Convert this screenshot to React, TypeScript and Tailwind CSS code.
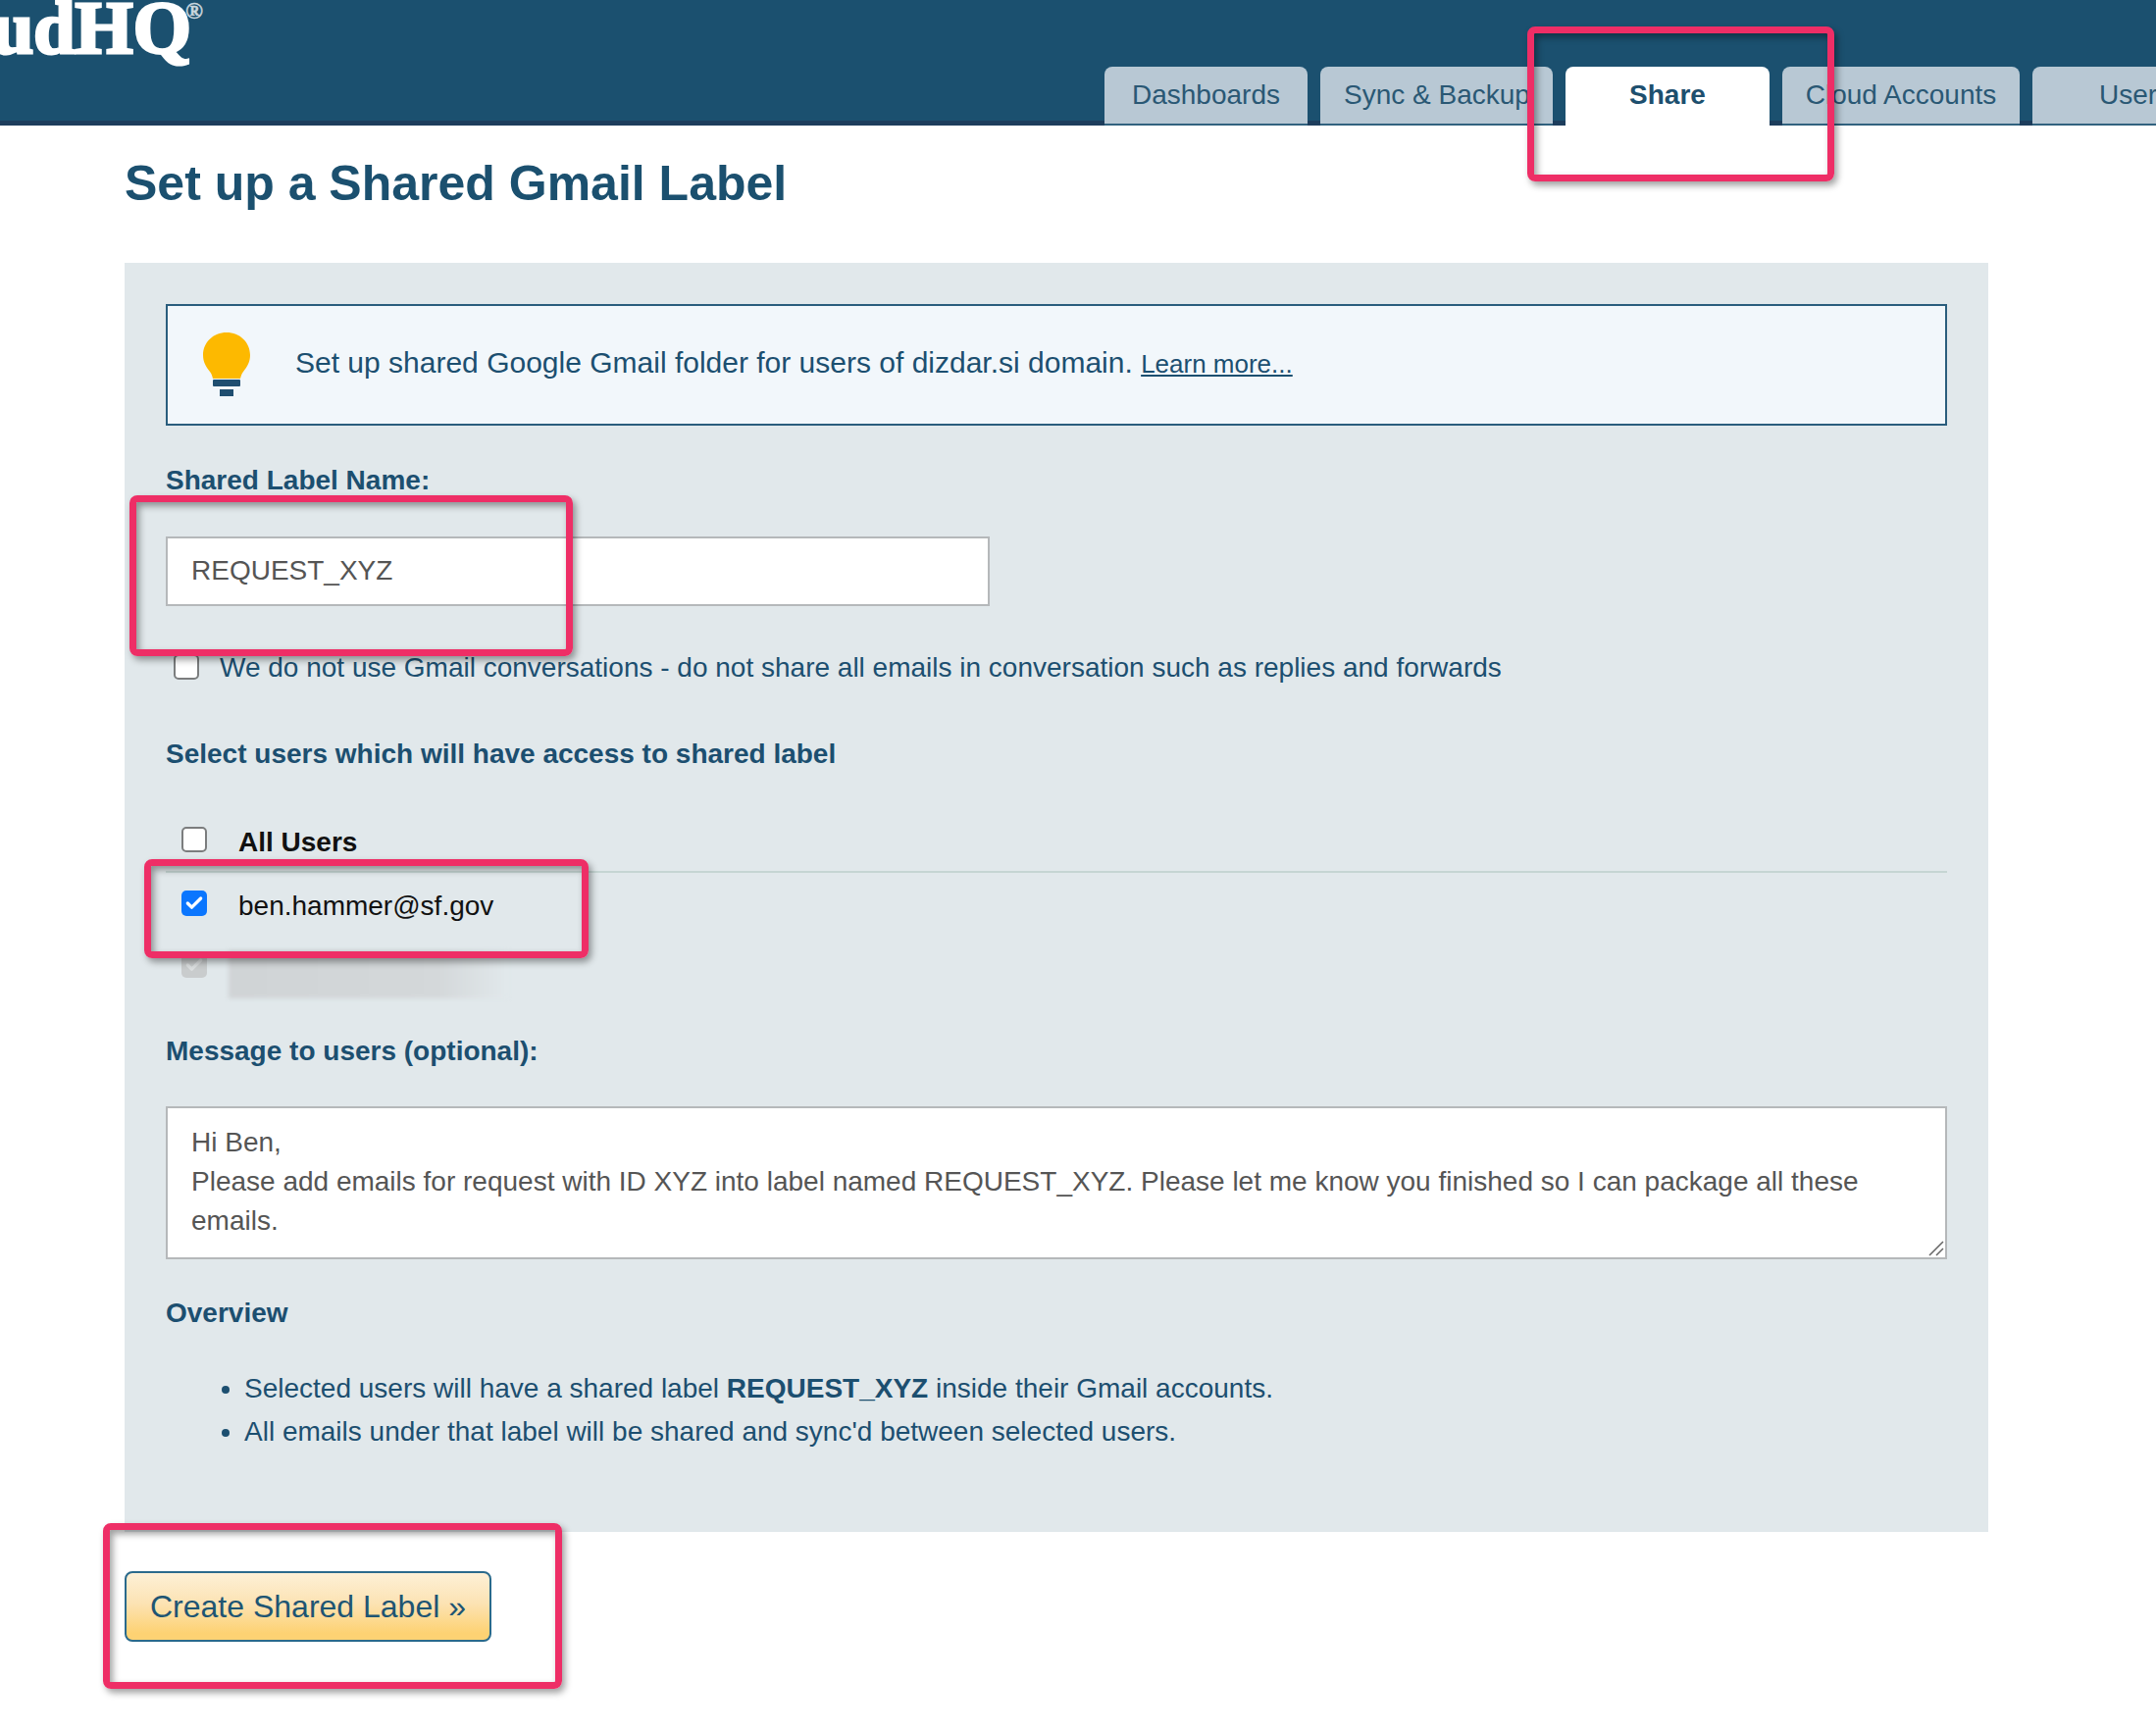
import { Check } from "lucide-react";

const tabClass =
  "h-[60px] shrink-0 rounded-t-[8px] border-b-2 border-[#31627f] bg-[#b8c8d4] text-center text-[28px] leading-[58px] text-[#2a5874]";

function Box({ state }: { state?: "checked" | "disabled" }) {
  if (state === "checked") {
    return (
      <span className="flex h-[26px] w-[26px] shrink-0 items-center justify-center rounded-[5px] bg-[#0b76fe]">
        <Check size={20} strokeWidth={4} className="text-white" />
      </span>
    );
  }
  if (state === "disabled") {
    return (
      <span className="flex h-[26px] w-[26px] shrink-0 items-center justify-center rounded-[5px] bg-[#c9cccd]">
        <Check size={20} strokeWidth={4} className="text-[#dcdfe0]" />
      </span>
    );
  }
  return <span className="h-[26px] w-[26px] shrink-0 rounded-[5px] border-2 border-[#7b7d7e] bg-white" />;
}

function Frame({ className }: { className: string }) {
  return (
    <div
      className={
        "pointer-events-none absolute rounded-[8px] border-[7px] border-[#ee2e66] shadow-[3px_4px_7px_rgba(0,0,0,0.38),inset_3px_4px_7px_rgba(0,0,0,0.38)] " +
        className
      }
    />
  );
}

export default function App() {
  return (
    <div className="relative h-[1766px] w-[2198px] overflow-hidden bg-white font-['Liberation_Sans',Arial,sans-serif]">
      <header className="flex h-[128px] items-end border-b-[5px] border-[#1d3d5c] bg-[#1b506f]">
        <div className="relative -ml-[122px] h-[123px] w-[317px] shrink-0 self-start font-['Liberation_Serif',serif] text-[76px] font-bold leading-[76px] text-white [-webkit-text-stroke:3px_white]">
          <span className="block -translate-y-[10px]">CloudHQ</span>
          <span className="absolute left-[311px] top-[-1px] text-[24px] leading-[24px] text-[#c9d6de] [-webkit-text-stroke:0.5px_#c9d6de]">®</span>
        </div>
        <nav className="relative -mb-[5px] ml-[931px] flex gap-[13px]">
          <div className={tabClass + " w-[207px]"}>Dashboards</div>
          <div className={tabClass + " w-[237px] pl-[24px] text-left"}>Sync &amp; Backup</div>
          <div className="h-[60px] w-[208px] shrink-0 rounded-t-[8px] bg-white text-center text-[28px] font-bold leading-[58px] text-[#1d4f6e]">
            Share
          </div>
          <div className={tabClass + " w-[242px]"}>Cloud Accounts</div>
          <div className={tabClass + " w-[200px] pl-[68px] text-left"}>Users</div>
        </nav>
      </header>

      <main className="pl-[127px] pr-[171px] text-[#1c4f70]">
        <h1 className="mt-[34px] text-[50px] font-bold leading-[50px] text-[#1b506f]">Set up a Shared Gmail Label</h1>

        <section className="mt-[56px] bg-[#e1e8eb] px-[42px] pb-[80px] pt-[42px]">
          <div className="flex h-[124px] items-center border-2 border-[#2a5d7d] bg-[#f2f7fb] pl-[36px]">
            <svg width="48" height="65" viewBox="0 0 48 65" className="shrink-0 -translate-y-[1px]">
              <path d="M24 0C10.5 0 0 10 0 23c0 7 3 12 7 17 1.5 2 2.5 4.5 3 7h28c.5-2.5 1.5-5 3-7 4-5 7-10 7-17C48 10 37.5 0 24 0z" fill="#fdb900" />
              <rect x="10" y="48" width="28" height="7" rx="1" fill="#1f4e70" />
              <rect x="17" y="58" width="14" height="7" fill="#1f4e70" />
            </svg>
            <p className="mb-[3px] ml-[46px] text-[30px] leading-[36px]">
              Set up shared Google Gmail folder for users of dizdar.si domain.{" "}
              <a className="text-[26px] underline">Learn more...</a>
            </p>
          </div>

          <label className="mt-[39px] block text-[28px] font-bold leading-[34px]">Shared Label Name:</label>
          <input
            readOnly
            defaultValue="REQUEST_XYZ"
            className="mt-[40px] block h-[71px] w-[840px] border-2 border-[#b5b8ba] bg-white px-[24px] pb-[2px] text-[28px] text-[#555555] outline-none"
          />

          <div className="ml-[8px] mt-[44px] flex h-[36px] items-center gap-[21px] text-[28px]">
            <Box />
            <span className="mt-[2px]">We do not use Gmail conversations - do not share all emails in conversation such as replies and forwards</span>
          </div>

          <h2 className="mt-[54px] text-[28px] font-bold leading-[34px]">Select users which will have access to shared label</h2>

          <div className="mt-[53px] border-b-2 border-[#c5d5d3] pb-[15px] pl-[16px]">
            <div className="flex h-[34px] items-center gap-[32px] text-[28px] font-bold text-[#111111]">
              <Box />
              <span className="mt-[6px] leading-[34px]">All Users</span>
            </div>
          </div>
          <div className="mt-[14px] flex h-[34px] items-center gap-[32px] pl-[16px] text-[28px] text-[#111111]">
            <Box state="checked" />
            <span className="mt-[6px] leading-[34px]">ben.hammer@sf.gov</span>
          </div>
          <div className="mt-[29px] flex h-[34px] items-center gap-[22px] pl-[16px]">
            <Box state="disabled" />
            <div className="mt-[18px] h-[49px] w-[285px] shrink-0 bg-[linear-gradient(90deg,#d0d4d6,#d4d8da_75%,#e1e8eb)] blur-[2px]" />
          </div>

          <label className="mt-[54px] block text-[28px] font-bold leading-[34px]">Message to users (optional):</label>
          <div className="relative mt-[39px]">
            <textarea
              readOnly
              defaultValue={
                "Hi Ben,\nPlease add emails for request with ID XYZ into label named REQUEST_XYZ. Please let me know you finished so I can package all these emails."
              }
              className="block h-[156px] w-full resize-none border-2 border-[#b5b8ba] bg-white px-[24px] pt-[15px] text-[28px] leading-[40px] text-[#555555] outline-none"
            />
            <svg width="16" height="16" viewBox="0 0 16 16" className="absolute bottom-[3px] right-[3px]">
              <path d="M1 15L15 1M8 15L15 8" stroke="#666666" strokeWidth="1.5" fill="none" />
            </svg>
          </div>

          <h3 className="mt-[38px] text-[28px] font-bold leading-[34px]">Overview</h3>
          <ul className="mt-[38px] list-disc pl-[80px] text-[28px] leading-[44px]">
            <li>
              Selected users will have a shared label <b>REQUEST_XYZ</b> inside their Gmail accounts.
            </li>
            <li>All emails under that label will be shared and sync'd between selected users.</li>
          </ul>
        </section>

        <button className="mt-[40px] h-[72px] w-[374px] rounded-[8px] border-2 border-[#2a6a8c] bg-[linear-gradient(180deg,#fdf0d6_0%,#fce3b4_45%,#fdd273_90%)] text-[32px] text-[#1e5573]">
          Create Shared Label »
        </button>
      </main>

      <Frame className="left-[1557px] top-[27px] h-[158px] w-[313px]" />
      <Frame className="left-[132px] top-[505px] h-[164px] w-[452px]" />
      <Frame className="left-[147px] top-[876px] h-[101px] w-[453px]" />
      <Frame className="left-[105px] top-[1553px] h-[169px] w-[468px]" />
    </div>
  );
}
